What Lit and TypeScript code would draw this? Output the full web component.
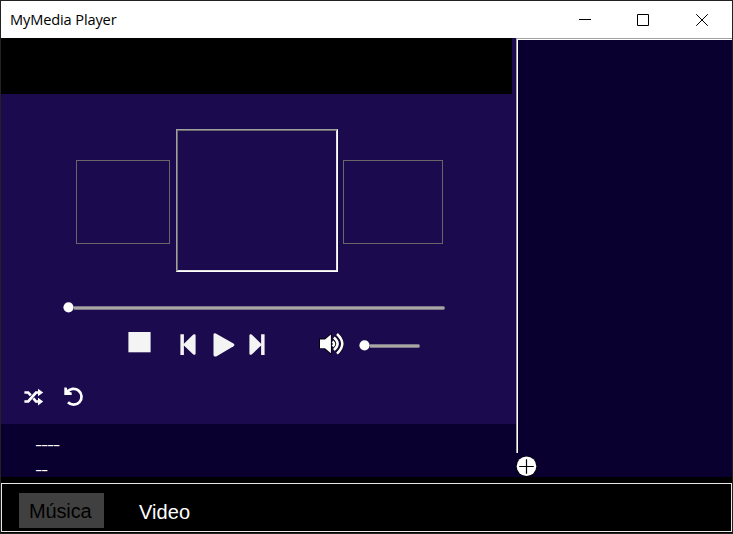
import { LitElement, html, css, svg } from "lit";
import { customElement, property, state } from "lit/decorators.js";
import { classMap } from "lit/directives/class-map.js";

@customElement("title-bar")
class TitleBar extends LitElement {
  @property() caption = "";

  static styles = css`
    :host {
      display: flex;
      flex: none;
      align-items: center;
      height: 37px;
      background: #fff;
      color: #000;
    }
    .caption {
      flex: 1;
      padding-left: 9px;
      font: 14.6px/37px "Open Sans", "Noto Sans", sans-serif;
      letter-spacing: -0.13px;
    }
    .buttons {
      display: flex;
      gap: 46px;
      padding-right: 24px;
    }
    svg {
      display: block;
      width: 12px;
      height: 12px;
      fill: none;
      stroke: #000;
      stroke-width: 1;
    }
    .minimize {
      margin-top: -1px;
    }
    .close {
      margin-left: 1px;
    }
  `;

  render() {
    return html`
      <span class="caption">${this.caption}</span>
      <div class="buttons">
        <svg class="minimize" viewBox="0 0 12 12"><path d="M0 6.5H12" /></svg>
        <svg viewBox="0 0 12 12"><path d="M.5 .5H11.5V11.5H.5Z" /></svg>
        <svg class="close" viewBox="0 0 12 12"><path d="M.2 .2L11.8 11.8M11.8 .2L.2 11.8" /></svg>
      </div>
    `;
  }
}

@customElement("media-slider")
class MediaSlider extends LitElement {
  static styles = css`
    :host {
      display: flex;
      align-items: center;
      height: 11px;
    }
    svg {
      display: block;
      width: 11px;
      height: 11px;
      fill: #fff;
    }
    .track {
      flex: 1;
      height: 2px;
      border: 1px solid #7d7789;
      border-left: 0;
      border-radius: 0 2px 2px 0;
      background: #a9a7a4;
    }
  `;

  render() {
    return html`
      <svg viewBox="0 0 11 11"><circle cx="5.5" cy="5.3" r="5.1" /></svg>
      <span class="track"></span>
    `;
  }
}

const icons = {
  stop: {
    w: 23,
    h: 21,
    art: svg`<path d="M.4 0H22.6V20.3H.4Z" fill="#f4f4f4"/>`,
  },
  previous: {
    w: 16,
    h: 22,
    art: svg`<path fill="#f4f4f4" d="M.4 .2H3.9V9.8L13.3 .5Q15.6 -.3 15.6 1.6V19.6Q15.6 21.4 13.3 20.6L3.9 11.4V21H.4Z"/>`,
  },
  play: {
    w: 22,
    h: 24,
    art: svg`<path fill="#f4f4f4" d="M.5 1.5Q.6 -.2 2.8 .4L20.5 10.4Q22.3 11.8 20.5 13.2L3.2 23.4Q.8 24.2 .5 22Z"/>`,
  },
  next: {
    w: 16,
    h: 22,
    art: svg`<path fill="#f4f4f4" d="M15.6 .2H12.1V9.8L2.7 .5Q.4 -.3 .4 1.6V19.6Q.4 21.4 2.7 20.6L12.1 11.4V21H15.6Z"/>`,
  },
  volume: {
    w: 26,
    h: 22,
    art: svg`
      <path d="M1 6.4H6L11.9 1.6V20.3L6 15.3H1Z" stroke="#000" stroke-width="1.6" paint-order="stroke"/>
      <g fill="none" stroke="#000" stroke-width="3.6">
        <path d="M13.6 8.4Q16.4 10.9 13.6 13.4"/>
        <path d="M14.9 4.6Q22.3 10.8 14.9 17"/>
        <path d="M18 1Q28.6 10.9 18 20.6"/>
      </g>
      <g fill="none" stroke="#fff" stroke-width="2.6">
        <path d="M13.6 8.4Q16.4 10.9 13.6 13.4"/>
        <path d="M14.9 4.6Q22.3 10.8 14.9 17"/>
        <path d="M18 1Q28.6 10.9 18 20.6"/>
      </g>`,
  },
  shuffle: {
    w: 20,
    h: 18,
    art: svg`
      <g fill="none" stroke="#fff" stroke-width="2.7">
        <path d="M.4 13.5H4.2L12 4.5H15"/>
        <path d="M.4 4.5H4.2L6.8 7.3M9.4 10.4L12 13.5H15"/>
      </g>
      <path d="M14 .7L19.2 4.5L14 8.2ZM14 9.8L19.2 13.5L14 17.4Z"/>`,
  },
  repeat: {
    w: 20,
    h: 20,
    art: svg`
      <path d="M3.2 5.2A7.9 7.9 0 1 1 4 15.3" fill="none" stroke="#fff" stroke-width="2.7"/>
      <path d="M.3 .6H2.6L4.1 4.6L7.7 5.4V8H.3Z"/>`,
  },
  add: {
    w: 22,
    h: 22,
    art: svg`
      <circle cx="10.5" cy="10.5" r="10.5" fill="#000"/>
      <circle cx="10.5" cy="10.2" r="9.8"/>
      <path d="M3.2 10.5H17.8M10.5 3.2V17.8" stroke="#000" stroke-width="1.2"/>`,
  },
};

@customElement("media-icon")
class MediaIcon extends LitElement {
  @property() name: keyof typeof icons = "play";

  static styles = css`
    :host,
    svg {
      display: block;
      fill: #fff;
    }
  `;

  render() {
    const { w, h, art } = icons[this.name];
    return html`<svg width=${w} height=${h} viewBox="0 0 ${w} ${h}">${art}</svg>`;
  }
}

@customElement("app-root")
class AppRoot extends LitElement {
  @state() private tab = "Música";

  static styles = css`
    * {
      box-sizing: border-box;
    }
    :host {
      display: flex;
      flex-direction: column;
      box-sizing: border-box;
      width: 733px;
      height: 534px;
      overflow: hidden;
      border: 1px solid #222;
      background: #000;
      color: #fff;
      font-family: "Liberation Sans", Arial, sans-serif;
    }
    .main {
      display: grid;
      flex: none;
      grid-template: 439px / 515px 1fr;
    }
    .left {
      display: flex;
      flex-direction: column;
      background: #1b0a4e;
    }
    .banner {
      flex: none;
      width: 511px;
      height: 56px;
      background: #000;
    }
    .stage {
      flex: none;
      height: 330px;
    }
    .covers {
      display: flex;
      align-items: flex-start;
      padding: 35px 0 0 75px;
    }
    .cover {
      height: 84px;
      margin-top: 31px;
      border: 1px solid #696766;
    }
    .before {
      width: 94px;
      margin-right: 6px;
    }
    .after {
      width: 100px;
      margin-left: 5px;
    }
    .current {
      width: 162px;
      height: 143px;
      border: 1px solid;
      border-color: #a0a0a0 #fff #fff #a0a0a0;
    }
    .inset {
      height: 100%;
      border: 1px solid;
      border-color: #696969 #e3e3e3 #e3e3e3 #696969;
    }
    .seek {
      width: 382px;
      margin: 30px 0 0 62px;
    }
    .transport {
      display: flex;
      align-items: flex-start;
      margin: 19px 0 0 127px;
    }
    .prev {
      margin: 2px 0 0 29px;
    }
    .play {
      margin: 1px 0 0 17px;
    }
    .next {
      margin: 2px 0 0 14px;
    }
    .volume {
      margin: 1px 0 0 54px;
    }
    .level {
      width: 61px;
      margin: 8px 0 0 14px;
    }
    .modes {
      display: flex;
      align-items: center;
      gap: 20px;
      margin: 30px 0 0 23px;
    }
    .info {
      height: 53px;
      padding: 9px 0 0 34px;
      overflow: hidden;
      background: #090030;
      font-size: 14px;
      line-height: 25px;
      letter-spacing: -0.8px;
    }
    .info div {
      height: 25px;
      transform: scaleX(1.554);
      transform-origin: left;
    }
    .queue {
      background: #090030;
    }
    .list {
      height: 415px;
      border-left: 1px solid #a0a0a0;
      border-top: 1px solid #a0a0a0;
    }
    .list-edge {
      height: 100%;
      border-left: 1px solid #fff;
      border-top: 1px solid #fff;
    }
    .add {
      margin-top: 3px;
    }
    .tabs {
      display: flex;
      flex: none;
      align-items: flex-start;
      height: 49px;
      margin-top: 6px;
      padding: 9px 0 0 17px;
      border: 1px solid #e8e8e8;
      font-size: 20px;
      line-height: 36px;
    }
    .tab {
      height: 35px;
      padding: 1px 0 0 11px;
      letter-spacing: 0.1px;
    }
    .tab.chosen {
      width: 85px;
      margin-right: 24px;
      padding: 0 0 0 10px;
      background: #404040;
      color: #000;
      letter-spacing: -0.15px;
    }
  `;

  render() {
    return html`
      <title-bar caption="MyMedia Player"></title-bar>
      <div class="main">
        <div class="left">
          <div class="banner"></div>
          <div class="stage">
            <div class="covers">
              <div class="cover before"></div>
              <div class="current"><div class="inset"></div></div>
              <div class="cover after"></div>
            </div>
            <media-slider class="seek"></media-slider>
            <div class="transport">
              <media-icon name="stop"></media-icon>
              <media-icon class="prev" name="previous"></media-icon>
              <media-icon class="play" name="play"></media-icon>
              <media-icon class="next" name="next"></media-icon>
              <media-icon class="volume" name="volume"></media-icon>
              <media-slider class="level"></media-slider>
            </div>
            <div class="modes">
              <media-icon name="shuffle"></media-icon>
              <media-icon name="repeat"></media-icon>
            </div>
          </div>
          <div class="info">
            <div>----</div>
            <div>--</div>
          </div>
        </div>
        <div class="queue">
          <div class="list"><div class="list-edge"></div></div>
          <media-icon class="add" name="add"></media-icon>
        </div>
      </div>
      <div class="tabs">
        ${["Música", "Video"].map(
          (name) => html`<div
            class=${classMap({ tab: true, chosen: name === this.tab })}
            @click=${() => (this.tab = name)}
          >${name}</div>`
        )}
      </div>
    `;
  }
}
